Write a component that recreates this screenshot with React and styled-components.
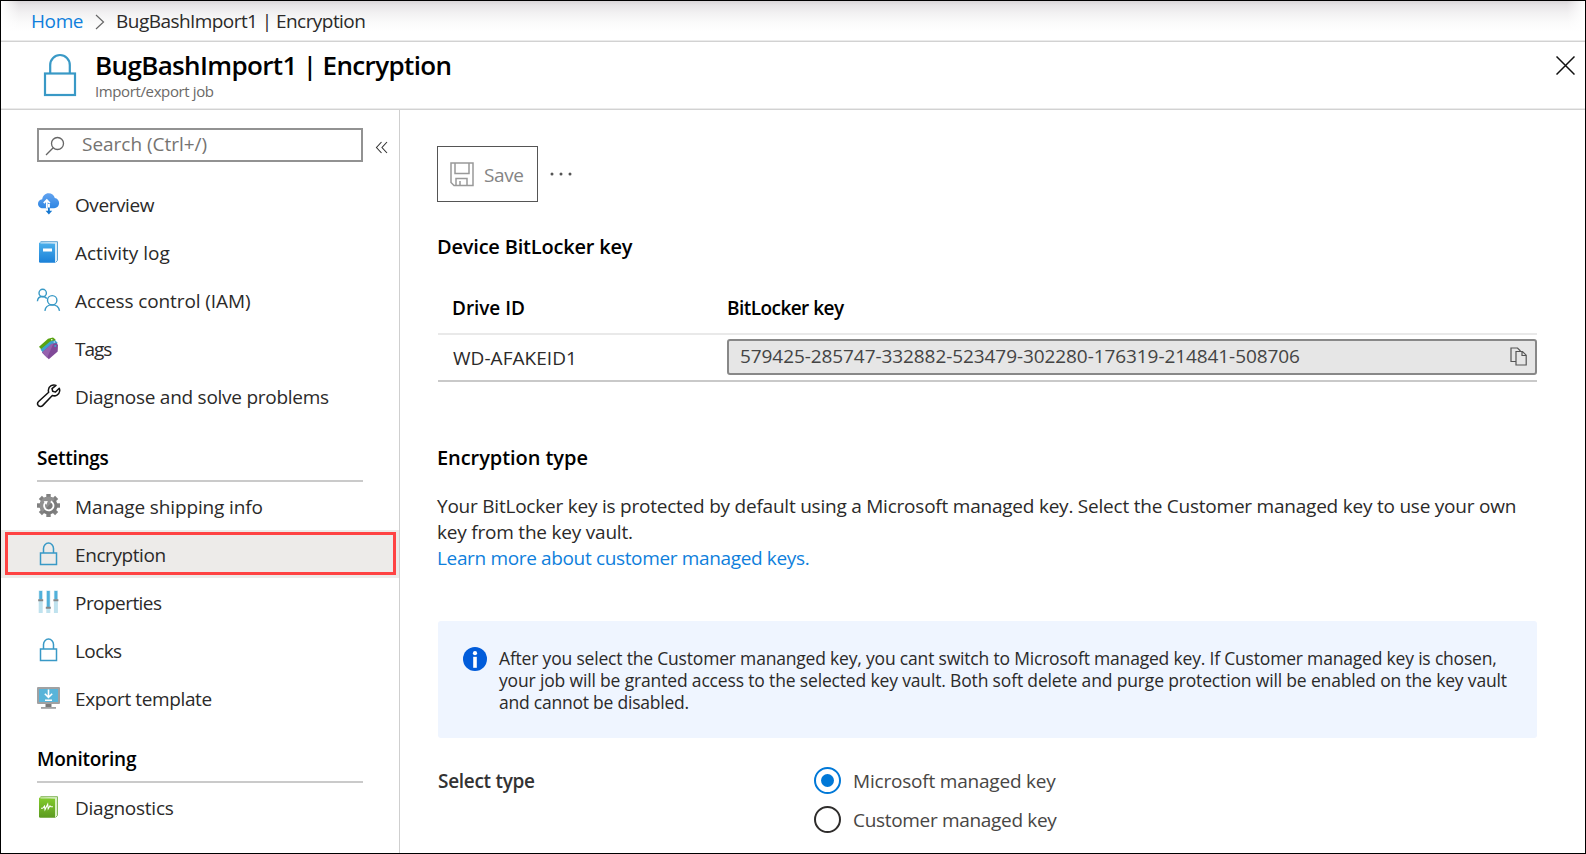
import React from 'react';
import styled, { createGlobalStyle, css } from 'styled-components';

const GlobalStyle = createGlobalStyle`
  *, *::before, *::after { box-sizing: border-box; }
  body {
    margin: 0;
    background: #fff;
    font-family: "Open Sans", "Noto Sans", sans-serif;
    font-size: 19px;
    color: #2b2a29;
  }
  svg { display: block; flex: none; }
`;

const Window = styled.div`
  display: flex;
  flex-direction: column;
  width: 1586px;
  height: 854px;
  border: 1px solid #000;
  background: #fff;
  overflow: hidden;
`;

const hairline = css`
  border-bottom: 1px solid #d2d2d2;
  box-shadow: inset 0 -1px 0 #ebebeb;
`;

const Breadcrumb = styled.nav`
  ${hairline}
  display: flex;
  align-items: center;
  height: 41px;
  padding: 0 0 0 30px;
  white-space: nowrap;
  background:
    linear-gradient(90deg, #fff, rgba(255, 255, 255, 0) 18px, rgba(255, 255, 255, 0) calc(100% - 18px), #fff),
    linear-gradient(#d9d5d8, #e6e4e6 4px, #f2f1f2 12px, #fbfbfb 22px, #fff 30px);

  svg { margin: 1px 11px 0 12px; }
`;

const CrumbLink = styled.a`
  color: #0f7fdc;
  letter-spacing: -0.4px;
`;

const Crumb = styled.span`
  letter-spacing: -0.56px;
`;

const Header = styled.header`
  ${hairline}
  display: flex;
  height: 68px;
  padding: 6px 10px 0 42px;

  > svg:first-child { margin-top: 5px; }
  > svg:last-child { margin: 8px 0 0 auto; }
`;

const Titles = styled.div`
  margin-left: 18px;
  white-space: nowrap;
`;

const Title = styled.h1`
  margin: 0;
  font-size: 26px;
  font-weight: 600;
  line-height: 34px;
  letter-spacing: -0.64px;
  color: #000;
`;

const Subtitle = styled.div`
  margin-top: -1px;
  font-size: 15px;
  line-height: 20px;
  letter-spacing: -0.38px;
  color: #6b6967;
`;

const Body = styled.div`
  display: flex;
  flex: 1;
  min-height: 0;
`;

const Sidebar = styled.aside`
  display: flex;
  flex-direction: column;
  flex: none;
  width: 399px;
  padding-top: 18px;
  border-right: 1px solid #cfcfcf;
`;

const SearchRow = styled.div`
  display: flex;
  align-items: center;
  margin: 0 0 18px 36px;

  > svg { margin: 4px 0 0 12px; }
`;

const SearchBox = styled.div`
  display: flex;
  align-items: center;
  width: 326px;
  height: 34px;
  padding: 0 0 0 6px;
  border: 2px solid #929292;
  color: #757371;

  svg { margin-top: 2px; }
  span { margin: 0 0 2px 17px; letter-spacing: -0.02px; }
`;

const NavItem = styled.div`
  position: relative;
  display: flex;
  align-items: center;
  height: 48px;
  padding-left: 35px;
  white-space: nowrap;
  letter-spacing: ${(p) => p.$tracking}px;
  background: ${(p) => (p.$active ? '#edebe9' : 'transparent')};

  > span { margin: 1px 0 0 14px; }
  > svg { margin-bottom: 1px; }
`;

const Highlight = styled.div`
  position: absolute;
  inset: 2px 3px 3px 4px;
  border: 3px solid #ff4343;
`;

const NavHeading = styled.h2`
  display: flex;
  align-items: flex-end;
  width: 326px;
  height: ${(p) => p.$height}px;
  margin: 0 0 0 36px;
  padding-bottom: ${(p) => p.$gap}px;
  border-bottom: 2px solid #cacaca;
  font-size: 19px;
  font-weight: 600;
  line-height: 27px;
  letter-spacing: -0.25px;
  color: #000;
`;

const Main = styled.main`
  flex: none;
  width: 1137px;
  padding: 36px 0 0 38px;
`;

const Content = styled.div`
  width: 1099px;
`;

const Toolbar = styled.div`
  display: flex;
  align-items: center;
  gap: 12px;
  margin-left: -1px;

  > svg { margin-top: 2px; }
`;

const SaveButton = styled.div`
  display: flex;
  align-items: center;
  width: 101px;
  height: 56px;
  padding-left: 12px;
  border: 1px solid #555;
  color: #858585;
  letter-spacing: -0.4px;

  span { margin: 1px 0 0 10px; }
`;

const SectionTitle = styled.h2`
  margin: ${(p) => p.$top}px 0 0 -1px;
  font-size: 20px;
  font-weight: 600;
  line-height: 28px;
  letter-spacing: ${(p) => p.$tracking}px;
  color: #000;
`;

const TableRow = styled.div`
  display: grid;
  grid-template-columns: 289px 1fr;
  align-items: center;
`;

const TableHead = styled(TableRow)`
  height: 53px;
  margin-top: 21px;
  border-bottom: 2px solid #e9e9e9;
  font-weight: 600;
  color: #000;
`;

const TableLine = styled(TableRow)`
  height: 47px;
  border-bottom: 2px solid #c9c9c9;
`;

const Cell = styled.div`
  padding-left: ${(p) => p.$indent || 0}px;
  letter-spacing: ${(p) => p.$tracking}px;
`;

const KeyField = styled.div`
  display: flex;
  align-items: center;
  justify-content: space-between;
  width: 810px;
  height: 36px;
  margin: 0 0 1px;
  padding: 0 8px 0 11px;
  border: 2px solid #888;
  border-radius: 3px;
  background: #e6e6e6;
  color: #444;
  letter-spacing: -0.08px;

  span { margin-bottom: 3px; }
  svg { margin-bottom: 2px; }
`;

const Paragraph = styled.p`
  margin: 21px 0 0 -1px;
  line-height: 26px;
`;

const TextLine = styled.span`
  display: block;
  white-space: nowrap;
  letter-spacing: ${(p) => p.$tracking}px;
`;

const MoreLink = styled(TextLine)`
  color: #0f7fdc;
`;

const InfoBox = styled.div`
  display: flex;
  gap: 12px;
  height: 117px;
  margin-top: 50px;
  padding: 26px 0 0 25px;
  border-radius: 3px;
  background: #eff5ff;
  font-size: 17.5px;
  line-height: 22px;
`;

const TypeRow = styled.div`
  display: grid;
  grid-template-columns: 376px 1fr;
  margin-top: 23px;
`;

const TypeLabel = styled.div`
  font-weight: 600;
  line-height: 41px;
  letter-spacing: -0.3px;
  color: #333;
`;

const Option = styled.div`
  display: flex;
  align-items: center;
  gap: 12px;
  height: 39px;
  color: #484644;
  letter-spacing: ${(p) => p.$tracking}px;
`;

const Radio = styled.div`
  display: grid;
  place-items: center;
  width: 27px;
  height: 27px;
  border: 2px solid ${(p) => (p.$on ? '#0078d7' : '#2f2d2c')};
  border-radius: 50%;

  &::after {
    content: '';
    width: 13px;
    height: 13px;
    border-radius: 50%;
    background: ${(p) => (p.$on ? '#0078d7' : 'transparent')};
  }
`;

const HeaderLock = () => (
  <svg width="34" height="44" viewBox="0 0 34 44" fill="none" stroke="#3999c6" strokeWidth="2.200">
    <rect x="2" y="20.500" width="30" height="21.500" />
    <path d="M7.200 20.500V12a9.800 10 0 0 1 19.600 0v8.500" />
  </svg>
);

const Icon = ({ children }) => (
  <svg width="25" height="25" viewBox="0 0 25 25" fill="none">{children}</svg>
);

const icons = {
  cloud: (
    <Icon>
      <defs>
        <linearGradient id="cloud" x1="0" y1="0" x2="0" y2="1">
          <stop offset="0" stopColor="#62a3f0" />
          <stop offset="1" stopColor="#2f86e2" />
        </linearGradient>
      </defs>
      <path d="M7 17.300C4 17.300 2 15.300 2 12.700c0-2.500 1.700-4.200 4.200-4.500C6.800 4.900 9.300 2.300 12.600 2.300c3 0 5.500 1.800 6.200 4.800 2.500.3 4.300 2.400 4.300 5 0 2.900-2.200 5.200-5 5.200z" fill="url(#cloud)" />
      <path d="M10.800 17.300V10M7.800 12.200l3-3.200 3 3.200" stroke="#fff" strokeWidth="1.700" />
      <path d="M12.900 13V21" stroke="#fff" strokeWidth="2" />
      <path d="M12.900 16.500V21" stroke="#1577d0" strokeWidth="1.800" />
      <path d="M9.600 19.800h6.600l-3.300 3.600z" fill="#1577d0" />
    </Icon>
  ),
  book: (
    <Icon>
      <defs>
        <linearGradient id="book" x1="0" y1="0" x2="0" y2="1">
          <stop offset="0" stopColor="#4cb1ec" />
          <stop offset="1" stopColor="#1a80d8" />
        </linearGradient>
      </defs>
      <path d="M4.500 2.700h17V21.500l-2 2" fill="#d8ecf9" stroke="#5ea3d2" strokeWidth="1" />
      <path d="M3 4.300l1-1 15 1.300v19.200H4.300A1.300 1.300 0 0 1 3 22.500z" fill="url(#book)" />
      <path d="M4.500 4h15" stroke="#c5e1f3" strokeWidth="1" />
      <rect x="7" y="9.500" width="9" height="3" fill="#fff" />
    </Icon>
  ),
  people: (
    <Icon>
      <g stroke="#3999c6" strokeWidth="1.400">
        <circle cx="6.700" cy="6" r="3.700" />
        <path d="M1.400 14.300c.3-3.200 2.600-4.800 5.200-4.800 1.800 0 3.200.7 4.200 2" />
        <circle cx="16.200" cy="13.300" r="4.700" />
        <path d="M8.900 23.800c.5-3.700 3.400-5.900 7.100-5.900s6.900 2.200 7.500 5.900" />
      </g>
    </Icon>
  ),
  tags: (
    <Icon>
      <path d="M3 11.800 12 3.700l5-1.200 2.500 2-1 5L7.500 17z" fill="#59a310" />
      <path d="M4.500 14.500 14 6.500l5-1.300 2.500 2.300-1.500 5-11 8z" fill="#3ea0cf" />
      <path d="M6 17.500l9.500-8.500L20.500 8 22 10l-.3 6.500L12.800 24.300z" fill="#804998" />
      <path d="M6 17.500l9.500-8.500 2-.4-6.400 14.200z" fill="#9662ae" />
      <circle cx="19.300" cy="11" r="1.100" fill="#39a2cf" />
      <circle cx="15.800" cy="4.700" r=".8" fill="#fff" />
      <circle cx="18.300" cy="7" r=".8" fill="#c9e4f1" />
    </Icon>
  ),
  wrench: (
    <Icon>
      <path d="M20 2.400c-3.200-1.400-7.300.7-7.600 4.500-.1.900 0 1.700.3 2.400L2.600 18.500c-1.100 1.100-1.300 2.900-.2 4.100 1.200 1.200 3.100 1.100 4.200 0l9.700-10.100c3.200 1.200 6.900-.8 7.400-4.500.1-1 0-1.900-.4-2.800l-3.800 3.900-2.800-.8-.7-2.700z" stroke="#111" strokeWidth="1.500" strokeLinejoin="round" />
    </Icon>
  ),
  gear: (
    <Icon>
      <g stroke="#808080" strokeWidth="4.400">
        {[0, 45, 90, 135].map((a) => (
          <path key={a} d="M12.500 1v23" transform={`rotate(${a} 12.500 12.500)`} />
        ))}
      </g>
      <circle cx="12.500" cy="12.500" r="9" fill="#7a7a7a" />
      <path d="M12.500 3.500a9 9 0 0 0-6 15.500L19 6A9 9 0 0 0 12.500 3.500z" fill="#909090" />
      <path d="M9.300 9.500a4.700 4.700 0 1 0 5.500-1.100" stroke="#fff" strokeWidth="1.800" />
      <path d="M7.600 8.200l4.200-.3-1.400 3.900z" fill="#fff" />
    </Icon>
  ),
  lock: (
    <Icon>
      <g stroke="#3999c6" strokeWidth="1.500">
        <rect x="4.500" y="12" width="16" height="11.500" />
        <path d="M7.500 12V7.500a5 5.400 0 0 1 10 0V12" />
      </g>
    </Icon>
  ),
  sliders: (
    <Icon>
      <path d="M2.700 1.500h4v22.500h-4zM10.300 1.500h4v22.500h-4zM17.900 1.500h4v22.500h-4z" fill="#bfe2ee" />
      <path d="M3.300 2h2.800v8.500H3.300zM10.900 2h2.800v16.500h-2.800zM18.500 2h2.800v8.500h-2.800z" fill="#50b0da" />
      <path d="M2.200 11.200h5M9.800 18.700h5M17.400 11.200h5" stroke="#868686" strokeWidth="2" />
    </Icon>
  ),
  monitor: (
    <Icon>
      <rect x="1" y="2" width="23" height="17" rx="1" fill="#a0a1a2" />
      <rect x="3" y="4" width="19" height="13" fill="#59b4d9" />
      <path d="M9.500 19h6v3h-6z" fill="#7a7a7a" />
      <path d="M5 22h15v1.800H5z" fill="#a0a1a2" />
      <path d="M12.500 4.500v7.500M8.800 8.800l3.700 3.600 3.700-3.600M9 15.200h7" stroke="#fff" strokeWidth="1.600" />
    </Icon>
  ),
  diagnostics: (
    <Icon>
      <defs>
        <linearGradient id="diag" x1="0" y1="0" x2="0" y2="1">
          <stop offset="0" stopColor="#83cc2c" />
          <stop offset="1" stopColor="#5c9a20" />
        </linearGradient>
      </defs>
      <path d="M4.500 2.700h17V21.500l-2 2" fill="#daf0c4" stroke="#83b65a" strokeWidth="1" />
      <path d="M3 4.300l1-1 15 1.300v19.200H4.300A1.300 1.300 0 0 1 3 22.500z" fill="url(#diag)" />
      <path d="M4.500 4h15" stroke="#d0e9b8" strokeWidth="1" />
      <path d="M5 14.300h1.700l1.800-2.300.5 3.600 2.700-5.400.5 4.600 1.800-3 .9 1h2" stroke="#fff" strokeWidth="1.100" />
    </Icon>
  ),
};

const topItems = [
  ['cloud', 'Overview', -0.42],
  ['book', 'Activity log', 0],
  ['people', 'Access control (IAM)', -0.1],
  ['tags', 'Tags', -1],
  ['wrench', 'Diagnose and solve problems', -0.26],
];

const settingsItems = [
  ['gear', 'Manage shipping info', -0.135],
  ['lock', 'Encryption', -0.41, true],
  ['sliders', 'Properties', -0.55],
  ['lock', 'Locks', -0.6],
  ['monitor', 'Export template', -0.38],
];

const monitoringItems = [['diagnostics', 'Diagnostics', -0.25]];

const NavList = ({ items }) =>
  items.map(([icon, label, tracking, active]) => (
    <NavItem key={label} $tracking={tracking} $active={active}>
      {icons[icon]}
      <span>{label}</span>
      {active && <Highlight />}
    </NavItem>
  ));

export default function App() {
  return (
    <Window>
      <GlobalStyle />
      <Breadcrumb>
        <CrumbLink>Home</CrumbLink>
        <svg width="10" height="16" viewBox="0 0 10 16" fill="none" stroke="#666" strokeWidth="1.200">
          <path d="M1 1l7.500 7L1 15" />
        </svg>
        <Crumb>BugBashImport1 | Encryption</Crumb>
      </Breadcrumb>
      <Header>
        <HeaderLock />
        <Titles>
          <Title>BugBashImport1 | Encryption</Title>
          <Subtitle>Import/export job</Subtitle>
        </Titles>
        <svg width="19" height="19" viewBox="0 0 19 19" stroke="#111" strokeWidth="1.500">
          <path d="M.5.5l18 18M18.500.5l-18 18" />
        </svg>
      </Header>
      <Body>
        <Sidebar>
          <SearchRow>
            <SearchBox>
              <svg width="20" height="20" viewBox="0 0 20 20" fill="none" stroke="#666" strokeWidth="1.300">
                <circle cx="12.500" cy="7.500" r="6" />
                <path d="M8.200 11.800L1 19" />
              </svg>
              <span>Search (Ctrl+/)</span>
            </SearchBox>
            <svg width="14" height="13" viewBox="0 0 14 13" fill="none" stroke="#333" strokeWidth="1.100">
              <path d="M6.500 1L1.500 6.500l5 5.500M12 1L7 6.500l5 5.500" />
            </svg>
          </SearchRow>
          <NavList items={topItems} />
          <NavHeading $height={62} $gap={8}>Settings</NavHeading>
          <NavList items={settingsItems} />
          <NavHeading $height={61} $gap={8}>Monitoring</NavHeading>
          <NavList items={monitoringItems} />
        </Sidebar>
        <Main>
          <Content>
            <Toolbar>
              <SaveButton>
                <svg width="24" height="25" viewBox="0 0 24 25" fill="none" stroke="#999" strokeWidth="1.500">
                  <path d="M1 1h22v22.500H4l-3-3zM5 1v10.500h14V1M6 23.500v-7h11v7M10 23.500V19" />
                </svg>
                <span>Save</span>
              </SaveButton>
              <svg width="24" height="6" viewBox="0 0 24 6" fill="#555">
                <circle cx="2" cy="2" r="1.500" />
                <circle cx="11" cy="2" r="1.500" />
                <circle cx="20" cy="2" r="1.500" />
              </svg>
            </Toolbar>
            <SectionTitle $top={31} $tracking={-0.2}>Device BitLocker key</SectionTitle>
            <TableHead>
              <Cell $indent={14} $tracking={-0.05}>Drive ID</Cell>
              <Cell $tracking={-0.55}>BitLocker key</Cell>
            </TableHead>
            <TableLine>
              <Cell $indent={15} $tracking={0.05}>WD-AFAKEID1</Cell>
              <KeyField>
                <span>579425-285747-332882-523479-302280-176319-214841-508706</span>
                <svg width="17" height="19" viewBox="0 0 17 19" fill="none" stroke="#555" strokeWidth="1.200">
                  <path d="M5.500 14.500H1V1h6.500l3 3M6 4.500h6.500l3.700 3.700V18H6zM12 4.500v4h4" />
                </svg>
              </KeyField>
            </TableLine>
            <SectionTitle $top={62} $tracking={-0.06}>Encryption type</SectionTitle>
            <Paragraph>
              <TextLine $tracking={-0.224}>
                Your BitLocker key is protected by default using a Microsoft managed key. Select the Customer managed key to use your own
              </TextLine>
              <TextLine $tracking={-0.21}>key from the key vault.</TextLine>
              <MoreLink as="a" $tracking={-0.35}>Learn more about customer managed keys.</MoreLink>
            </Paragraph>
            <InfoBox>
              <svg width="24" height="24" viewBox="0 0 24 24">
                <circle cx="12" cy="12" r="12" fill="#015cda" />
                <circle cx="12" cy="6.200" r="2.100" fill="#fff" />
                <rect x="10.200" y="9.800" width="3.600" height="11" fill="#fff" />
              </svg>
              <div>
                <TextLine $tracking={-0.189}>
                  After you select the Customer mananged key, you cant switch to Microsoft managed key. If Customer managed key is chosen,
                </TextLine>
                <TextLine $tracking={-0.159}>
                  your job will be granted access to the selected key vault. Both soft delete and purge protection will be enabled on the key vault
                </TextLine>
                <TextLine $tracking={-0.228}>and cannot be disabled.</TextLine>
              </div>
            </InfoBox>
            <TypeRow>
              <TypeLabel>Select type</TypeLabel>
              <div>
                <Option $tracking={-0.2}>
                  <Radio $on />
                  Microsoft managed key
                </Option>
                <Option $tracking={-0.32}>
                  <Radio />
                  Customer managed key
                </Option>
              </div>
            </TypeRow>
          </Content>
        </Main>
      </Body>
    </Window>
  );
}
